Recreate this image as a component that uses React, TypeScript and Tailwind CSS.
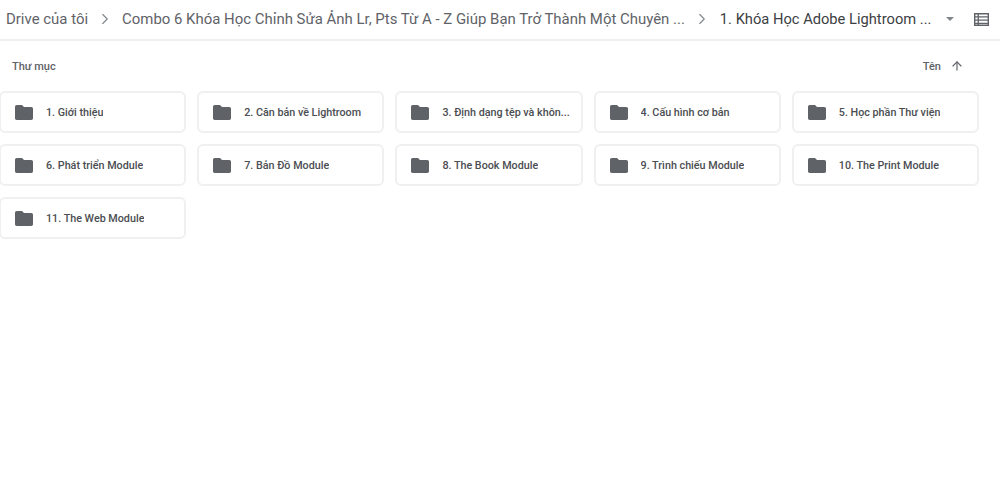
import { ArrowUp, ChevronRight } from 'lucide-react'

const FOLDERS = [
  '1. Giới thiệu',
  '2. Căn bản về Lightroom',
  '3. Định dạng tệp và khôn...',
  '4. Cấu hình cơ bản',
  '5. Học phần Thư viện',
  '6. Phát triển Module',
  '7. Bản Đồ Module',
  '8. The Book Module',
  '9. Trình chiếu Module',
  '10. The Print Module',
  '11. The Web Module',
]

function FolderIcon() {
  return (
    <svg viewBox="0 0 18 15" className="h-[15px] w-[18px] shrink-0 fill-[#5f6368]">
      <path d="M7 0H1.7C.8 0 0 .8 0 1.7v11.6C0 14.2.8 15 1.7 15h14.6c.9 0 1.7-.8 1.7-1.7V3.6c0-.9-.8-1.7-1.7-1.7H9L7 0z" />
    </svg>
  )
}

function ListIcon() {
  return (
    <svg viewBox="0 0 15 13" className="h-[13px] w-[15px] shrink-0 fill-[#5f6368]">
      <path d="M0 0h15v13H0V0zm1.4 1.4v1.9h2.2V1.4H1.4zm3.5 0v1.9h8.7V1.4H4.9zM1.4 4.6v1.9h2.2V4.6H1.4zm3.5 0v1.9h8.7V4.6H4.9zM1.4 7.8v1.9h2.2V7.8H1.4zm3.5 0v1.9h8.7V7.8H4.9zM1.4 11v.6h2.2V11H1.4zm3.5 0v.6h8.7V11H4.9z" />
    </svg>
  )
}

function Crumb({ children }: { children: string }) {
  return <span className="whitespace-nowrap text-[14.95px] text-[#5f6368]">{children}</span>
}

export default function App() {
  return (
    <div className="h-[478px] w-[1000px] overflow-hidden bg-white font-['Roboto',sans-serif]">
      <header className="flex h-[41px] items-center border-b-2 border-[#f0f0f0] pb-px pl-[6px]">
        <Crumb>Drive của tôi</Crumb>
        <ChevronRight className="ml-[8px] mr-[8px] h-[18px] w-[18px] shrink-0 text-[#80868b]" strokeWidth={1.5} />
        <Crumb>Combo 6 Khóa Học Chỉnh Sửa Ảnh Lr, Pts Từ A - Z Giúp Bạn Trở Thành Một Chuyên ...</Crumb>
        <ChevronRight className="ml-[8px] mr-[9px] h-[18px] w-[18px] shrink-0 text-[#80868b]" strokeWidth={1.5} />
        <span className="whitespace-nowrap text-[14.7px] text-[#3c4043]">1. Khóa Học Adobe Lightroom ...</span>
        <div className="ml-auto mr-[11px] flex items-center gap-[20px]">
          <div className="h-0 w-0 border-x-[4px] border-t-[4px] border-x-transparent border-t-[#80868b]" />
          <ListIcon />
        </div>
      </header>

      <div className="flex h-[50px] items-center justify-between pl-3 pr-[36px] pt-[2px]">
        <span className="text-[11px] font-medium text-[#5f6368]">Thư mục</span>
        <div className="flex items-center gap-[9px]">
          <span className="text-[11px] font-medium text-[#5f6368]">Tên</span>
          <ArrowUp className="-mt-[2px] h-[14px] w-[14px] text-[#5f6368]" strokeWidth={2} />
        </div>
      </div>

      <div className="-ml-px grid w-[980px] grid-cols-5 gap-x-[11px] gap-y-[11px]">
        {FOLDERS.map((name) => (
          <div
            key={name}
            className="flex h-[42px] items-center gap-[13px] rounded-[6px] border-2 border-[#f0f0f0] bg-white pl-[14px]"
          >
            <FolderIcon />
            <span className="truncate pt-[2px] text-[10.75px] font-medium text-[#4a4d51]">{name}</span>
          </div>
        ))}
      </div>
    </div>
  )
}
